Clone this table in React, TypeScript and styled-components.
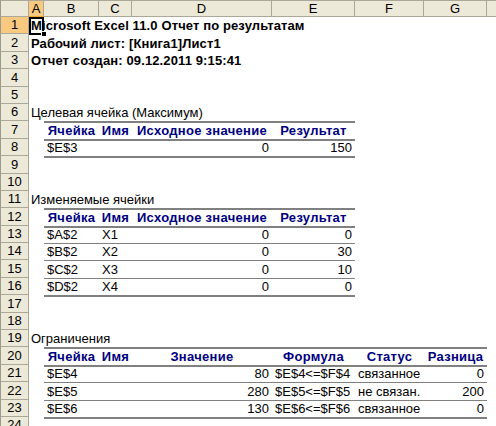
import React from 'react';
import styled, { createGlobalStyle } from 'styled-components';

const GlobalStyle = createGlobalStyle`
  html, body { margin: 0; padding: 0; background: #ffffff; }
  body {
    font-family: "Liberation Sans", Arial, sans-serif;
    font-size: 13px;
    overflow: hidden;
  }
`;

const ROW_H = 17.4;
const HEAD_H = 17;

const Sheet = styled.div`
  position: relative;
  width: 496px;
  height: 426px;
  overflow: hidden;
  display: grid;
  grid-template-columns: 29px 15px 55px 33px 140px 83px 69px 63px 64px;
  grid-template-rows: ${HEAD_H}px repeat(24, ${ROW_H}px);
  background: #ffffff;
`;

const Corner = styled.div`
  grid-row: 1;
  grid-column: 1;
  box-sizing: border-box;
  background: #ece9d8;
  border: 1px solid #aca899;
  border-left-color: #9d9a8a;
`;

const ColHead = styled.div<{ $col: number; $active?: boolean }>`
  grid-row: 1;
  grid-column: ${(p) => p.$col};
  box-sizing: border-box;
  background: ${(p) => (p.$active ? '#f9c97f' : '#ece9d8')};
  border-top: 1px solid #aca899;
  border-right: 1px solid #aca899;
  border-bottom: 1px solid ${(p) => (p.$active ? '#f0a030' : '#aca899')};
  display: flex;
  align-items: flex-end;
  justify-content: center;
  line-height: 15px;
  color: #000;
`;

const RowHead = styled.div<{ $row: number; $active?: boolean }>`
  grid-row: ${(p) => p.$row};
  grid-column: 1;
  box-sizing: border-box;
  background: ${(p) => (p.$active ? '#f9c97f' : '#ece9d8')};
  border-left: 1px solid #9d9a8a;
  border-right: 1px solid #aca899;
  border-bottom: 1px solid #aca899;
  display: flex;
  align-items: flex-end;
  justify-content: center;
  line-height: 15px;
  padding-bottom: 1px;
  color: #000;
`;

type Align = 'left' | 'right' | 'center';

const Cell = styled.div<{
  $row: number;
  $col: number;
  $span?: number;
  $align?: Align;
  $bold?: boolean;
  $head?: boolean;
  $top?: number;
  $last?: boolean;
}>`
  grid-row: ${(p) => p.$row};
  grid-column: ${(p) => p.$col} / span ${(p) => p.$span ?? 1};
  box-sizing: border-box;
  border-top: ${(p) => (p.$top ? `${p.$top}px solid #808080` : 'none')};
  box-shadow: ${(p) => (p.$last ? '0 2px 0 0 #808080' : 'none')};
  display: flex;
  align-items: flex-end;
  justify-content: ${(p) =>
    p.$align === 'right' ? 'flex-end' : p.$align === 'center' ? 'center' : 'flex-start'};
  padding: 0 3px 1px 3px;
  line-height: 15px;
  white-space: nowrap;
  overflow: visible;
  font-weight: ${(p) => (p.$bold || p.$head ? 700 : 400)};
  letter-spacing: ${(p) => (p.$head ? '0.3px' : p.$bold ? '0.12px' : '0')};
  color: ${(p) => (p.$head ? '#000080' : '#000')};
`;

const TitleCell = styled(Cell)`
  padding-left: 2px;
`;

const ActiveCell = styled.div`
  position: absolute;
  left: 29px;
  top: 17px;
  width: 15px;
  height: 18px;
  box-sizing: border-box;
  border: 2px solid #000;
  pointer-events: none;
  z-index: 2;
`;

const FillHandle = styled.div`
  position: absolute;
  left: 41px;
  top: 31px;
  width: 6px;
  height: 6px;
  box-sizing: border-box;
  background: #000;
  border: 1px solid #fff;
  z-index: 3;
`;

const COL_LETTERS = ['A', 'B', 'C', 'D', 'E', 'F', 'G', 'H'];

// grid column index: 1 = row header, A = 2, B = 3, ...
const gc = (letter: string) => COL_LETTERS.indexOf(letter) + 2;

type TableCol = { col: string; align: Align };
type TableSpec = {
  start: number;
  cols: TableCol[];
  header: string[];
  rows: string[][];
};

const tables: TableSpec[] = [
  {
    start: 7,
    cols: [
      { col: 'B', align: 'left' },
      { col: 'C', align: 'left' },
      { col: 'D', align: 'right' },
      { col: 'E', align: 'right' },
    ],
    header: ['Ячейка', 'Имя', 'Исходное значение', 'Результат'],
    rows: [['$E$3', '', '0', '150']],
  },
  {
    start: 12,
    cols: [
      { col: 'B', align: 'left' },
      { col: 'C', align: 'left' },
      { col: 'D', align: 'right' },
      { col: 'E', align: 'right' },
    ],
    header: ['Ячейка', 'Имя', 'Исходное значение', 'Результат'],
    rows: [
      ['$A$2', 'X1', '0', '0'],
      ['$B$2', 'X2', '0', '30'],
      ['$C$2', 'X3', '0', '10'],
      ['$D$2', 'X4', '0', '0'],
    ],
  },
  {
    start: 20,
    cols: [
      { col: 'B', align: 'left' },
      { col: 'C', align: 'left' },
      { col: 'D', align: 'right' },
      { col: 'E', align: 'left' },
      { col: 'F', align: 'left' },
      { col: 'G', align: 'right' },
    ],
    header: ['Ячейка', 'Имя', 'Значение', 'Формула', 'Статус', 'Разница'],
    rows: [
      ['$E$4', '', '80', '$E$4<=$F$4', 'связанное', '0'],
      ['$E$5', '', '280', '$E$5<=$F$5', 'не связан.', '200'],
      ['$E$6', '', '130', '$E$6<=$F$6', 'связанное', '0'],
    ],
  },
];

const titles: { row: number; text: string; bold: boolean }[] = [
  { row: 1, text: 'Microsoft Excel 11.0 Отчет по результатам', bold: true },
  { row: 2, text: 'Рабочий лист: [Книга1]Лист1', bold: true },
  { row: 3, text: 'Отчет создан: 09.12.2011 9:15:41', bold: true },
  { row: 6, text: 'Целевая ячейка (Максимум)', bold: false },
  { row: 11, text: 'Изменяемые ячейки', bold: false },
  { row: 19, text: 'Ограничения', bold: false },
];

// sheet row n lives in grid row n + 1 (grid row 1 is the column header)
const gr = (n: number) => n + 1;

export default function App() {
  return (
    <>
      <GlobalStyle />
      <Sheet>
        <Corner />
        {COL_LETTERS.map((l) => (
          <ColHead key={l} $col={gc(l)} $active={l === 'A'}>
            {l === 'H' ? '' : l}
          </ColHead>
        ))}
        {Array.from({ length: 24 }, (_, i) => (
          <RowHead key={i} $row={gr(i + 1)} $active={i === 0}>
            {i + 1}
          </RowHead>
        ))}
        {titles.map((t) => (
          <TitleCell key={t.row} $row={gr(t.row)} $col={gc('A')} $span={7} $bold={t.bold}>
            {t.text}
          </TitleCell>
        ))}
        {tables.map((t) =>
          [t.header, ...t.rows].map((r, i, all) =>
            t.cols.map((c, j) => (
              <Cell
                key={`${t.start}-${i}-${j}`}
                $row={gr(t.start + i)}
                $col={gc(c.col)}
                $align={i === 0 ? 'center' : c.align}
                $head={i === 0}
                $top={i <= 1 ? 2 : 1}
                $last={i === all.length - 1}
              >
                {r[j]}
              </Cell>
            ))
          )
        )}
        <ActiveCell />
        <FillHandle />
      </Sheet>
    </>
  );
}
